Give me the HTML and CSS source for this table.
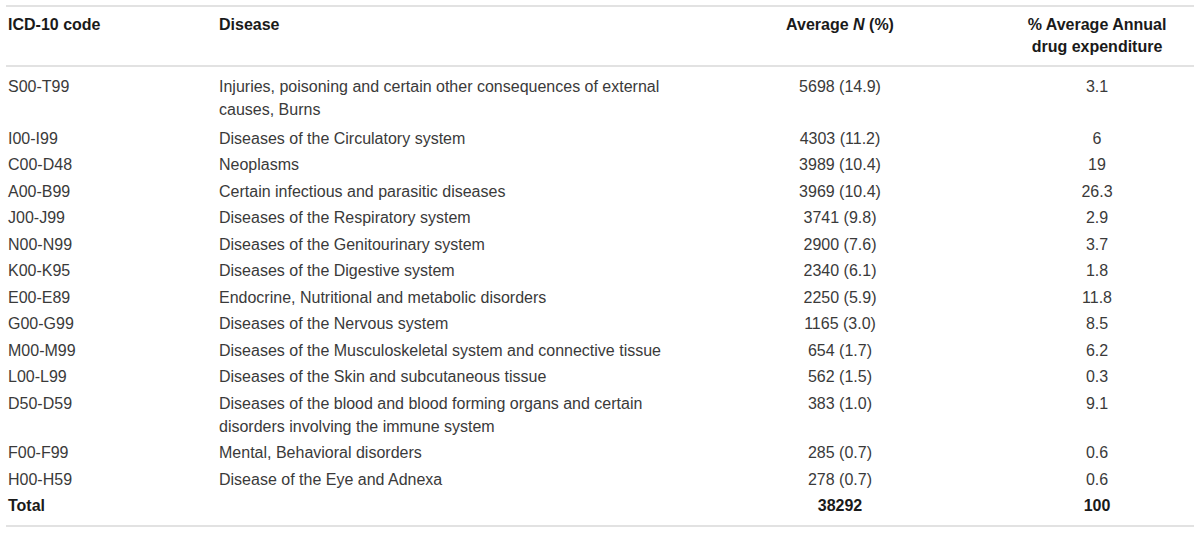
FILE: index.html
```html
<!DOCTYPE html>
<html lang="en">
<head>
<meta charset="utf-8">
<title>ICD-10 table</title>
<link rel="stylesheet" href="styles.css">
</head>
<body>
<table class="data-table">
  <colgroup>
    <col class="col-code">
    <col class="col-disease">
    <col class="col-avg">
    <col class="col-exp">
  </colgroup>
  <thead>
    <tr>
      <th class="left">ICD-10 code</th>
      <th class="left">Disease</th>
      <th class="center">Average <i>N</i> (%)</th>
      <th class="center">% Average Annual<br>drug expenditure</th>
    </tr>
  </thead>
  <tbody>
    <tr class="first"><td>S00-T99</td><td>Injuries, poisoning and certain other consequences of external causes, Burns</td><td class="center">5698 (14.9)</td><td class="center">3.1</td></tr>
    <tr><td>I00-I99</td><td>Diseases of the Circulatory system</td><td class="center">4303 (11.2)</td><td class="center">6</td></tr>
    <tr><td>C00-D48</td><td>Neoplasms</td><td class="center">3989 (10.4)</td><td class="center">19</td></tr>
    <tr><td>A00-B99</td><td>Certain infectious and parasitic diseases</td><td class="center">3969 (10.4)</td><td class="center">26.3</td></tr>
    <tr><td>J00-J99</td><td>Diseases of the Respiratory system</td><td class="center">3741 (9.8)</td><td class="center">2.9</td></tr>
    <tr><td>N00-N99</td><td>Diseases of the Genitourinary system</td><td class="center">2900 (7.6)</td><td class="center">3.7</td></tr>
    <tr><td>K00-K95</td><td>Diseases of the Digestive system</td><td class="center">2340 (6.1)</td><td class="center">1.8</td></tr>
    <tr><td>E00-E89</td><td>Endocrine, Nutritional and metabolic disorders</td><td class="center">2250 (5.9)</td><td class="center">11.8</td></tr>
    <tr><td>G00-G99</td><td>Diseases of the Nervous system</td><td class="center">1165 (3.0)</td><td class="center">8.5</td></tr>
    <tr><td>M00-M99</td><td>Diseases of the Musculoskeletal system and connective tissue</td><td class="center">654 (1.7)</td><td class="center">6.2</td></tr>
    <tr><td>L00-L99</td><td>Diseases of the Skin and subcutaneous tissue</td><td class="center">562 (1.5)</td><td class="center">0.3</td></tr>
    <tr><td>D50-D59</td><td>Diseases of the blood and blood forming organs and certain disorders involving the immune system</td><td class="center">383 (1.0)</td><td class="center">9.1</td></tr>
    <tr><td>F00-F99</td><td>Mental, Behavioral disorders</td><td class="center">285 (0.7)</td><td class="center">0.6</td></tr>
    <tr><td>H00-H59</td><td>Disease of the Eye and Adnexa</td><td class="center">278 (0.7)</td><td class="center">0.6</td></tr>
    <tr class="total"><td>Total</td><td></td><td class="center">38292</td><td class="center">100</td></tr>
  </tbody>
</table>
</body>
</html>
```

FILE: styles.css
```css
html, body {
  margin: 0;
  padding: 0;
  background: #ffffff;
}

body {
  padding: 5px 6px 0 6px;
  font-family: "Liberation Sans", Arial, Helvetica, sans-serif;
  font-size: 16px;
  color: #3a3a3a;
}

.data-table {
  width: 1188px;
  border-collapse: collapse;
  table-layout: fixed;
  border-top: 2px solid #e2e2e2;
  border-bottom: 2px solid #e2e2e2;
}

.col-code { width: 211px; }
.col-disease { width: 463px; }
.col-avg { width: 320px; }
.col-exp { width: 194px; }

.data-table th {
  font-weight: bold;
  color: #1a1a1a;
  line-height: 22.5px;
  padding: 6.5px 2px 6px 2px;
  vertical-align: top;
  border-bottom: 2px solid #e2e2e2;
}

.data-table th i {
  font-style: italic;
}

.data-table td {
  line-height: 23px;
  padding: 1.75px 2px;
  vertical-align: top;
}

.left { text-align: left; }
.center { text-align: center; }

.data-table tr.first td {
  padding-top: 8px;
  padding-bottom: 4.5px;
}

.data-table tr.total td {
  font-weight: bold;
  color: #1a1a1a;
  padding-bottom: 8px;
}
```
